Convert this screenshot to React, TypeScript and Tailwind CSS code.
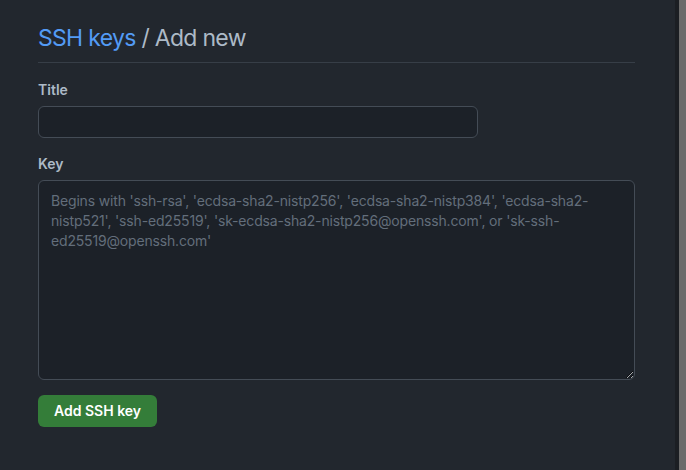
import { useState } from "react";

const placeholderText =
  "Begins with 'ssh-rsa', 'ecdsa-sha2-nistp256', 'ecdsa-sha2-nistp384', 'ecdsa-sha2-nistp521', 'ssh-ed25519', 'sk-ecdsa-sha2-nistp256@openssh.com', or 'sk-ssh-ed25519@openssh.com'";

export default function App() {
  const [title, setTitle] = useState("");
  const [key, setKey] = useState("");

  return (
    <div
      className="flex min-h-[470px] bg-[#22272e] text-[#adbac7]"
      style={{ fontFamily: "Inter, 'Noto Sans', sans-serif" }}
    >
      <main className="flex-1 pl-[38px] pr-[40px]">
        <div className="border-b border-[#373e47] pt-[20px] pb-[6px]">
          <h2 className="text-[23px] leading-[36px] font-normal tracking-[-0.7px]">
            <a href="#" className="text-[#539bf5]">
              SSH keys
            </a>{" "}
            / Add new
          </h2>
        </div>

        <form className="flex flex-col" onSubmit={(e) => e.preventDefault()}>
          <label htmlFor="ssh-title" className="mt-[17px] text-sm leading-5 font-semibold">
            Title
          </label>
          <input
            id="ssh-title"
            value={title}
            onChange={(e) => setTitle(e.target.value)}
            className="mt-[6px] h-[32px] w-[440px] rounded-md border border-[#444c56] bg-[#1c2128] px-3 text-sm outline-none"
          />

          <label htmlFor="ssh-key" className="mt-[16px] text-sm leading-5 font-semibold">
            Key
          </label>
          <textarea
            id="ssh-key"
            value={key}
            onChange={(e) => setKey(e.target.value)}
            placeholder={placeholderText}
            className="mt-[6px] h-[200px] w-full rounded-md border border-[#444c56] bg-[#1c2128] px-3 pt-[10px] text-sm leading-5 tracking-[-0.17px] outline-none placeholder:text-[#636e7b]"
          />

          <div className="mt-[15px]">
            <button
              type="submit"
              className="h-[32px] rounded-md bg-[#347d39] px-4 text-sm font-semibold text-white"
            >
              Add SSH key
            </button>
          </div>
        </form>
      </main>
      <div className="w-[4px] bg-[#1b1e23]" />
      <div className="w-[7px] bg-[#6b6b6b]" />
    </div>
  );
}
